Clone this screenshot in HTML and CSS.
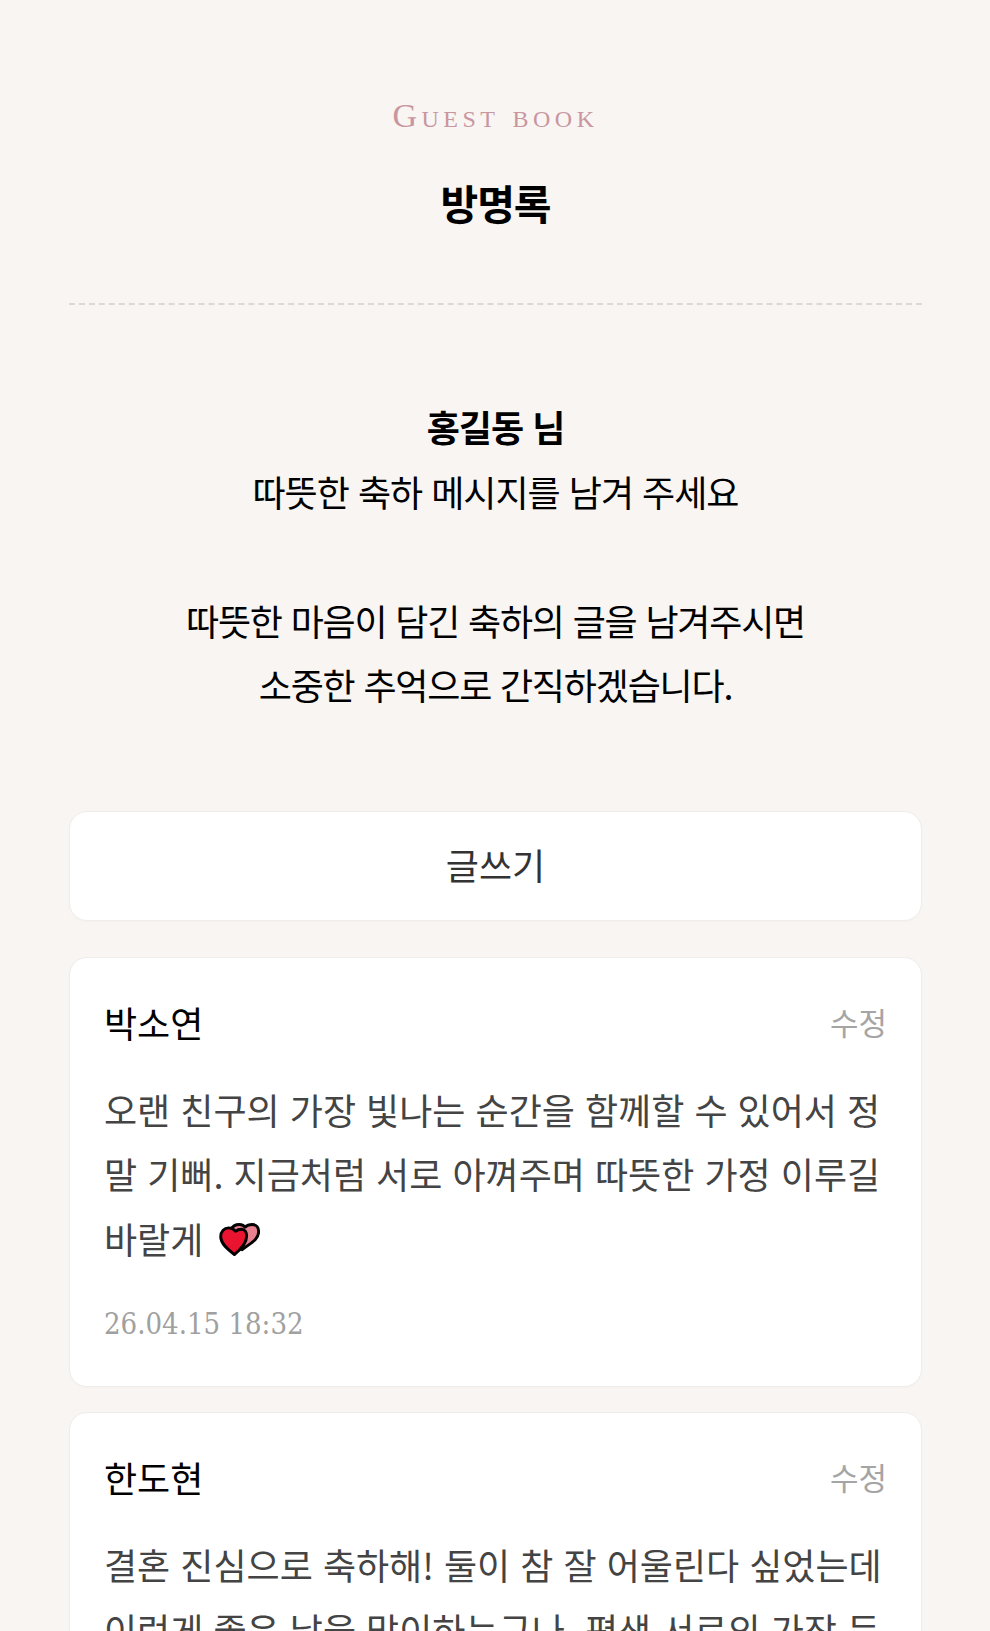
FILE: index.html
```html
<!DOCTYPE html>
<html lang="ko">
<head>
<meta charset="utf-8">
<title>방명록</title>
<link rel="stylesheet" href="styles.css">
</head>
<body>
<main class="page">
  <header class="head">
    <p class="eyebrow">Guest book</p>
    <h1 class="title">방명록</h1>
  </header>
  <section class="intro">
    <p class="intro-name"><strong>홍길동 님</strong><br>따뜻한 축하 메시지를 남겨 주세요</p>
    <p class="intro-msg">따뜻한 마음이 담긴 축하의 글을 남겨주시면<br>소중한 추억으로 간직하겠습니다.</p>
  </section>
  <button class="write" type="button">글쓰기</button>
  <article class="card">
    <div class="card-top"><span class="name">박소연</span><span class="edit">수정</span></div>
    <p class="body">오랜 친구의 가장 빛나는 순간을 함께할 수 있어서 정말 기뻐. 지금처럼 서로 아껴주며 따뜻한 가정 이루길 바랄게 <svg class="hearts" viewBox="0 0 120 96" aria-hidden="true"><path d="M36 18C40 7 50 4 60 4C67 4 72 7 76 12C82 6 90 4 98 4C110 4 116 14 116 26C116 48 90 60 68 78L40 60Z" fill="#e8808f" stroke="#000" stroke-width="8.5" stroke-linejoin="round"/><path d="M45 92C30 80 5 62 5 40C5 23 16 14 28 14C37 14 44 18 48 24C53 20 60 18 66 18C76 18 81 28 81 38C81 60 60 80 45 92Z" fill="#ea1430" stroke="#000" stroke-width="8.5" stroke-linejoin="round"/></svg></p>
    <p class="date">26.04.15 18:32</p>
  </article>
  <article class="card">
    <div class="card-top"><span class="name">한도현</span><span class="edit">수정</span></div>
    <p class="body">결혼 진심으로 축하해! 둘이 참 잘 어울린다 싶었는데 이런게 좋은 날을 맞이하는구나. 평생 서로의 가장 든든한 편이 되어주길 바랄게</p>
  </article>
</main>
</body>
</html>
```
FILE: styles.css
```css
* { box-sizing: border-box; }
html, body { margin: 0; height: 1631px; overflow: hidden; }
body {
  background: #f8f5f3;
  color: #000;
  font-family: "Noto Sans CJK KR", "Liberation Serif", serif;
}
.page { padding: 98px 68px 0 69px; }
.head { text-align: center; padding-bottom: 74px; border-bottom: 2px dashed #dcd8d6; }
.eyebrow {
  margin: 0;
  font-family: "Liberation Serif", serif;
  font-variant: small-caps;
  font-size: 34px;
  line-height: 36px;
  letter-spacing: 4.5px;
  color: #c9969f;
}
.title { margin: 41px 0 0; font-size: 41px; line-height: 54px; font-weight: 700; letter-spacing: -1px; }
.intro { text-align: center; font-size: 36px; line-height: 64.5px; letter-spacing: -1px; padding-top: 89px; }
.intro p { margin: 0; }
.intro .intro-msg { margin-top: 64.5px; letter-spacing: -1.2px; }
.intro strong { font-weight: 700; }
.write {
  display: block;
  width: 100%;
  height: 110px;
  margin-top: 94px;
  margin-bottom: 36px;
  background: #fff;
  border: 1px solid #efecea;
  border-radius: 18px;
  box-shadow: 0 1px 3px rgba(0, 0, 0, .02);
  font: inherit;
  font-size: 36px;
  color: #333;
  padding: 0 0 4px;
}
.card {
  margin-bottom: 25px;
  padding: 36px 34px 42px 34px;
  background: #fff;
  border: 1px solid #efecea;
  border-radius: 18px;
  box-shadow: 0 1px 3px rgba(0, 0, 0, .02);
}
.card-top { display: flex; justify-content: space-between; align-items: center; }
.name { font-size: 36px; line-height: 56px; }
.edit { font-size: 31px; color: #a5a5a5; }
.body { margin: 27px 0 0; font-size: 36px; line-height: 64.8px; color: #444; }
.hearts { width: 41px; height: 33px; margin-left: 6px; vertical-align: -2px; }
.date { margin: 33px 0 0; font-family: "DejaVu Serif Condensed", "DejaVu Serif", serif; font-stretch: condensed; font-size: 29px; line-height: 40px; color: #a0a0a0; }
```
